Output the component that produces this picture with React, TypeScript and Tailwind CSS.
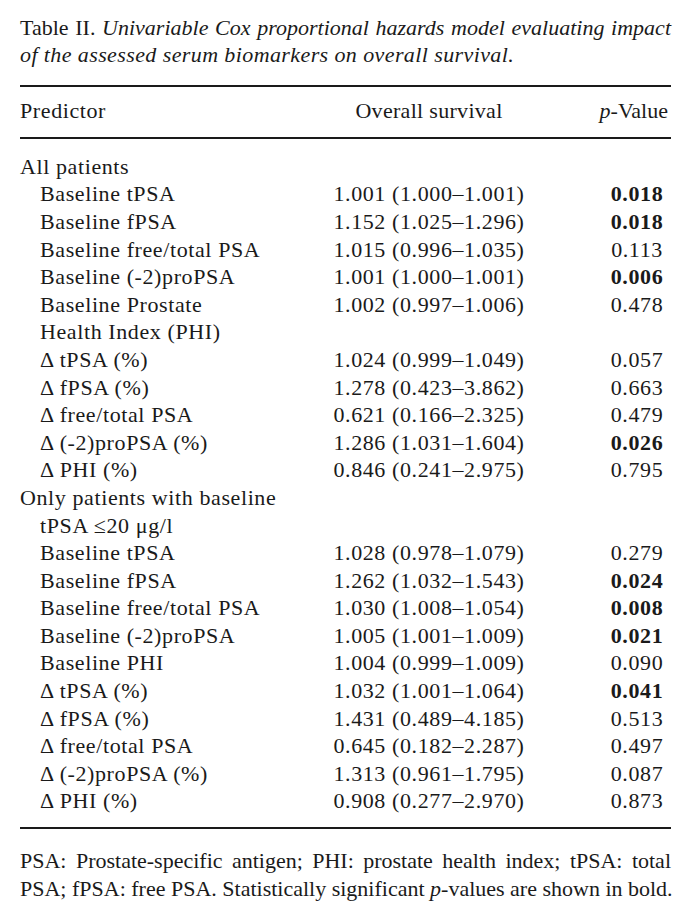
import React from "react";

type Row = { label: string; indent: boolean; hr?: string; p?: string; bold?: boolean };

const rows: Row[] = [
  { label: "All patients", indent: false },
  { label: "Baseline tPSA", indent: true, hr: "1.001 (1.000–1.001)", p: "0.018", bold: true },
  { label: "Baseline fPSA", indent: true, hr: "1.152 (1.025–1.296)", p: "0.018", bold: true },
  { label: "Baseline free/total PSA", indent: true, hr: "1.015 (0.996–1.035)", p: "0.113" },
  { label: "Baseline (-2)proPSA", indent: true, hr: "1.001 (1.000–1.001)", p: "0.006", bold: true },
  { label: "Baseline Prostate", indent: true, hr: "1.002 (0.997–1.006)", p: "0.478" },
  { label: "Health Index (PHI)", indent: true },
  { label: "Δ tPSA (%)", indent: true, hr: "1.024 (0.999–1.049)", p: "0.057" },
  { label: "Δ fPSA (%)", indent: true, hr: "1.278 (0.423–3.862)", p: "0.663" },
  { label: "Δ free/total PSA", indent: true, hr: "0.621 (0.166–2.325)", p: "0.479" },
  { label: "Δ (-2)proPSA (%)", indent: true, hr: "1.286 (1.031–1.604)", p: "0.026", bold: true },
  { label: "Δ PHI (%)", indent: true, hr: "0.846 (0.241–2.975)", p: "0.795" },
  { label: "Only patients with baseline", indent: false },
  { label: "tPSA ≤20 μg/l", indent: true },
  { label: "Baseline tPSA", indent: true, hr: "1.028 (0.978–1.079)", p: "0.279" },
  { label: "Baseline fPSA", indent: true, hr: "1.262 (1.032–1.543)", p: "0.024", bold: true },
  { label: "Baseline free/total PSA", indent: true, hr: "1.030 (1.008–1.054)", p: "0.008", bold: true },
  { label: "Baseline (-2)proPSA", indent: true, hr: "1.005 (1.001–1.009)", p: "0.021", bold: true },
  { label: "Baseline PHI", indent: true, hr: "1.004 (0.999–1.009)", p: "0.090" },
  { label: "Δ tPSA (%)", indent: true, hr: "1.032 (1.001–1.064)", p: "0.041", bold: true },
  { label: "Δ fPSA (%)", indent: true, hr: "1.431 (0.489–4.185)", p: "0.513" },
  { label: "Δ free/total PSA", indent: true, hr: "0.645 (0.182–2.287)", p: "0.497" },
  { label: "Δ (-2)proPSA (%)", indent: true, hr: "1.313 (0.961–1.795)", p: "0.087" },
  { label: "Δ PHI (%)", indent: true, hr: "0.908 (0.277–2.970)", p: "0.873" },
];

export default function App() {
  return (
    <div className="min-h-[921px] w-[693px] bg-white text-[#1a1a1a] font-['Liberation_Serif',serif] text-[22px]">
      <div className="ml-[20px] w-[651px] pt-[14px]">
        <div className="leading-[27px]">
          <div className="whitespace-nowrap text-justify [text-align-last:justify]">
            Table II. <i>Univariable Cox proportional hazards model evaluating impact</i>
          </div>
          <div className="whitespace-nowrap tracking-[0.4px]">
            <i>of the assessed serum biomarkers on overall survival.</i>
          </div>
        </div>

        <div className="mt-[17px] h-[2px] bg-[#1a1a1a]" />

        <div className="grid grid-cols-[310px_198px_1fr] pt-[10px] pb-[12px] leading-[27.8px] tracking-[0.6px]">
          <div>Predictor</div>
          <div className="text-center tracking-[0.3px]">Overall survival</div>
          <div className="pr-[3px] text-right whitespace-nowrap tracking-normal">
            <i>p</i>-Value
          </div>
        </div>

        <div className="h-[2px] bg-[#1a1a1a]" />

        <div className="pt-[14px] pb-[12px] leading-[27.6px] tracking-[0.6px]">
          {rows.map((r, i) => (
            <div key={i} className="grid grid-cols-[310px_198px_1fr]">
              <div className={r.indent ? "pl-[20px] whitespace-nowrap" : "whitespace-nowrap"}>{r.label}</div>
              <div className="text-center whitespace-nowrap">{r.hr ?? ""}</div>
              <div className={r.bold ? "pl-[75px] text-center font-bold" : "pl-[75px] text-center"}>{r.p ?? ""}</div>
            </div>
          ))}
        </div>

        <div className="h-[2px] bg-[#1a1a1a]" />

        <div className="mt-[18px] leading-[28px]">
          <div className="whitespace-nowrap text-justify [text-align-last:justify]">
            PSA: Prostate-specific antigen; PHI: prostate health index; tPSA: total
          </div>
          <div className="whitespace-nowrap text-justify [text-align-last:justify]">
            PSA; fPSA: free PSA. Statistically significant <i>p</i>-values are shown in bold.
          </div>
        </div>
      </div>
    </div>
  );
}
